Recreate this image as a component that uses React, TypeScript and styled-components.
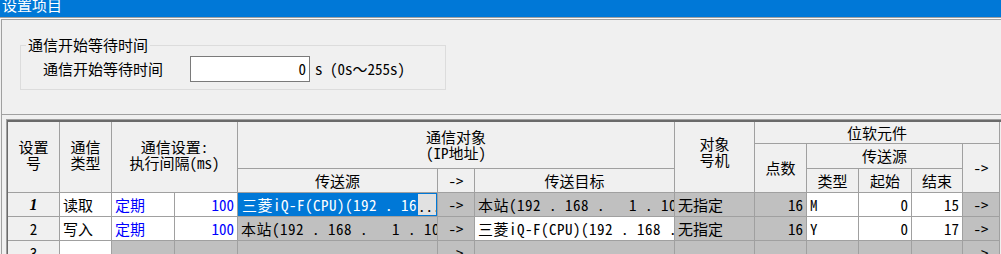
import React from "react";
import styled, { createGlobalStyle, css } from "styled-components";

const FONT = `"Noto Sans Mono CJK SC", "Noto Sans CJK SC", "Noto Sans CJK JP", sans-serif`;
const LINE = "#a0a0a0";

const Global = createGlobalStyle`
  html, body { margin: 0; padding: 0; background: #f0f0f0; }
  body { width: 1001px; height: 254px; overflow: hidden; font-family: ${FONT}; font-size: 15px; color: #000; }
  * { box-sizing: border-box; }
`;

const Window = styled.div`
  width: 1001px;
  height: 254px;
  overflow: hidden;
  background: #f0f0f0;
  display: flex;
  flex-direction: column;
`;

const TitleBar = styled.div`
  flex: none;
  height: 18px;
  background: #0078d7;
  border-bottom: 1px solid ${LINE};
  overflow: hidden;
  padding-left: 2px;
`;

const TitleText = styled.div`
  color: #fff;
  font-size: 15px;
  line-height: 15px;
  margin-top: -3px;
  white-space: nowrap;
`;

const Separator = styled.div`
  flex: none;
  height: 1px;
  background: #fafafa;
`;

const Panel = styled.div`
  flex: 1;
  min-height: 0;
  margin-left: 1px;
  border-left: 1px solid ${LINE};
  border-top: 1px solid ${LINE};
  display: flex;
  flex-direction: column;
`;

const TopSection = styled.div`
  flex: none;
  height: 95px;
  border-bottom: 1px solid ${LINE};
  padding-left: 18px;
  padding-top: 17px;
`;

const GroupBox = styled.fieldset`
  width: 426px;
  margin: 0;
  padding: 3px 0 7px 0;
  border: 1px solid #dcdcdc;
  min-inline-size: 0;
`;

const GroupLegend = styled.legend`
  margin-left: 5px;
  padding: 0 2px;
  line-height: 16px;
  font-size: 15px;
  white-space: nowrap;
`;

const FieldRow = styled.div`
  display: flex;
  align-items: center;
  padding-left: 22px;
  height: 26px;
`;

const FieldLabel = styled.span`
  width: 120px;
  line-height: 16px;
  white-space: nowrap;
`;

const NumberBox = styled.div`
  margin-left: 27px;
  width: 120px;
  height: 26px;
  background: #fff;
  border: 1px solid #7a7a7a;
  display: flex;
  align-items: center;
  justify-content: flex-end;
  padding-right: 3px;
  line-height: 16px;
`;

const UnitText = styled.span`
  margin-left: 5px;
  white-space: pre;
  line-height: 16px;
`;

const TableFrame = styled.div`
  flex: 1;
  min-height: 0;
  margin: 4px 0 0 4px;
  border-top: 1px solid ${LINE};
  border-left: 1px solid ${LINE};
`;

const TableInner = styled.div`
  height: 100%;
  border-top: 2px solid #6a6a6a;
  border-left: 1px solid #6a6a6a;
  overflow: hidden;
`;

const Grid = styled.div`
  display: grid;
  grid-template-columns: 52px 52px 63px 63px 200px 37px 200px 80px 52px 52px 53px 51px 37px;
  grid-template-rows: 22px 25px 24px 24px 24px 24px;
`;

type Tone = "head" | "white" | "gray";
type Align = "left" | "center" | "right";

const toneBg: Record<Tone, string> = {
  head: "#f0f0f0",
  white: "#ffffff",
  gray: "#c0c0c0",
};

const Cell = styled.div<{
  $c: number;
  $r: number;
  $cs?: number;
  $rs?: number;
  $tone: Tone;
  $align?: Align;
  $blue?: boolean;
  $wide?: boolean;
}>`
  grid-column: ${(p) => p.$c} / span ${(p) => p.$cs ?? 1};
  grid-row: ${(p) => p.$r} / span ${(p) => p.$rs ?? 1};
  border-right: 1px solid ${LINE};
  border-bottom: 1px solid ${LINE};
  background: ${(p) => toneBg[p.$tone]};
  color: ${(p) => (p.$blue ? "#0000ff" : "#000")};
  display: flex;
  align-items: center;
  justify-content: ${(p) =>
    p.$align === "right" ? "flex-end" : p.$align === "center" ? "center" : "flex-start"};
  padding: 0 3px;
  white-space: pre;
  overflow: hidden;
  line-height: 16px;
  min-width: 0;
  letter-spacing: ${(p) => (p.$wide ? "0.5px" : "0")};
`;

const HeadCell = styled(Cell)<{ $lift?: number }>`
  flex-direction: column;
  justify-content: center;
  align-items: center;
  text-align: center;
  white-space: pre;
  padding-bottom: ${(p) => p.$lift ?? 0}px;
`;

const RowNumber = styled.span<{ $current?: boolean }>`
  width: 100%;
  text-align: center;
  ${(p) =>
    p.$current &&
    css`
      font-weight: bold;
      font-style: italic;
      font-family: "Liberation Serif", serif;
      font-size: 16px;
    `}
`;

const SelectedCell = styled(Cell)`
  padding: 0;
  align-items: stretch;
`;

const SelectedText = styled.div`
  flex: 1;
  min-width: 0;
  background: #0078d7;
  color: #fff;
  padding-left: 4px;
  display: flex;
  align-items: center;
  overflow: hidden;
  white-space: pre;
  letter-spacing: 0.5px;
`;

const EllipsisButton = styled.div`
  flex: none;
  width: 20px;
  background: #e1e1e1;
  border: 1px solid #0078d7;
  display: flex;
  align-items: flex-end;
  padding: 0 0 3px 0;
  overflow: hidden;
  white-space: pre;
  line-height: 12px;
  letter-spacing: 0px;
`;

const IQF = "三菱iQ-F(CPU)(192 . 168 .   1 .  11)";
const LOCAL = "本站(192 . 168 .   1 . 10)";

export default function App() {
  return (
    <>
      <Global />
      <Window>
        <TitleBar>
          <TitleText>设置项目</TitleText>
        </TitleBar>
        <Separator />
        <Panel>
          <TopSection>
            <GroupBox>
              <GroupLegend>通信开始等待时间</GroupLegend>
              <FieldRow>
                <FieldLabel>通信开始等待时间</FieldLabel>
                <NumberBox>0</NumberBox>
                <UnitText>s (0s～255s)</UnitText>
              </FieldRow>
            </GroupBox>
          </TopSection>
          <TableFrame>
            <TableInner>
              <Grid>
                <HeadCell $c={1} $r={1} $rs={3} $tone="head" $lift={4}>{"设置\n号"}</HeadCell>
                <HeadCell $c={2} $r={1} $rs={3} $tone="head" $lift={4}>{"通信\n类型"}</HeadCell>
                <HeadCell $c={3} $cs={2} $r={1} $rs={3} $tone="head" $lift={4}>{"通信设置:\n执行间隔(ms)"}</HeadCell>
                <HeadCell $c={5} $cs={3} $r={1} $rs={2} $tone="head">{"通信对象\n(IP地址)"}</HeadCell>
                <HeadCell $c={5} $r={3} $tone="head">传送源</HeadCell>
                <HeadCell $c={6} $r={3} $tone="head">-&gt;</HeadCell>
                <HeadCell $c={7} $r={3} $tone="head">传送目标</HeadCell>
                <HeadCell $c={8} $r={1} $rs={3} $tone="head" $lift={10}>{"对象\n号机"}</HeadCell>
                <HeadCell $c={9} $cs={5} $r={1} $tone="head">位软元件</HeadCell>
                <HeadCell $c={9} $r={2} $rs={2} $tone="head">点数</HeadCell>
                <HeadCell $c={10} $cs={3} $r={2} $tone="head">传送源</HeadCell>
                <HeadCell $c={13} $r={2} $rs={2} $tone="head">-&gt;</HeadCell>
                <HeadCell $c={10} $r={3} $tone="head">类型</HeadCell>
                <HeadCell $c={11} $r={3} $tone="head">起始</HeadCell>
                <HeadCell $c={12} $r={3} $tone="head">结束</HeadCell>

                {/* row 1 */}
                <Cell $c={1} $r={4} $tone="head" $align="center">
                  <RowNumber $current>1</RowNumber>
                </Cell>
                <Cell $c={2} $r={4} $tone="white">读取</Cell>
                <Cell $c={3} $r={4} $tone="white" $blue>定期</Cell>
                <Cell $c={4} $r={4} $tone="white" $blue $align="right">100</Cell>
                <SelectedCell $c={5} $r={4} $tone="white">
                  <SelectedText>{IQF}</SelectedText>
                  <EllipsisButton>...</EllipsisButton>
                </SelectedCell>
                <Cell $c={6} $r={4} $tone="gray" $align="center">-&gt;</Cell>
                <Cell $c={7} $r={4} $tone="gray" $wide>{LOCAL}</Cell>
                <Cell $c={8} $r={4} $tone="gray">无指定</Cell>
                <Cell $c={9} $r={4} $tone="gray" $align="right">16</Cell>
                <Cell $c={10} $r={4} $tone="white">M</Cell>
                <Cell $c={11} $r={4} $tone="white" $align="right">0</Cell>
                <Cell $c={12} $r={4} $tone="white" $align="right">15</Cell>
                <Cell $c={13} $r={4} $tone="gray" $align="center">-&gt;</Cell>

                {/* row 2 */}
                <Cell $c={1} $r={5} $tone="head" $align="center">
                  <RowNumber>2</RowNumber>
                </Cell>
                <Cell $c={2} $r={5} $tone="white">写入</Cell>
                <Cell $c={3} $r={5} $tone="white" $blue>定期</Cell>
                <Cell $c={4} $r={5} $tone="white" $blue $align="right">100</Cell>
                <Cell $c={5} $r={5} $tone="gray" $wide>{LOCAL}</Cell>
                <Cell $c={6} $r={5} $tone="gray" $align="center">-&gt;</Cell>
                <Cell $c={7} $r={5} $tone="white" $wide>{IQF}</Cell>
                <Cell $c={8} $r={5} $tone="gray">无指定</Cell>
                <Cell $c={9} $r={5} $tone="gray" $align="right">16</Cell>
                <Cell $c={10} $r={5} $tone="white">Y</Cell>
                <Cell $c={11} $r={5} $tone="white" $align="right">0</Cell>
                <Cell $c={12} $r={5} $tone="white" $align="right">17</Cell>
                <Cell $c={13} $r={5} $tone="gray" $align="center">-&gt;</Cell>

                {/* row 3 */}
                <Cell $c={1} $r={6} $tone="head" $align="center">
                  <RowNumber>3</RowNumber>
                </Cell>
                <Cell $c={2} $r={6} $tone="white" />
                <Cell $c={3} $r={6} $tone="gray" />
                <Cell $c={4} $r={6} $tone="gray" />
                <Cell $c={5} $r={6} $tone="gray" />
                <Cell $c={6} $r={6} $tone="gray" $align="center">-&gt;</Cell>
                <Cell $c={7} $r={6} $tone="gray" />
                <Cell $c={8} $r={6} $tone="gray" />
                <Cell $c={9} $r={6} $tone="gray" />
                <Cell $c={10} $r={6} $tone="gray" />
                <Cell $c={11} $r={6} $tone="gray" />
                <Cell $c={12} $r={6} $tone="gray" />
                <Cell $c={13} $r={6} $tone="gray" $align="center">-&gt;</Cell>
              </Grid>
            </TableInner>
          </TableFrame>
        </Panel>
      </Window>
    </>
  );
}
